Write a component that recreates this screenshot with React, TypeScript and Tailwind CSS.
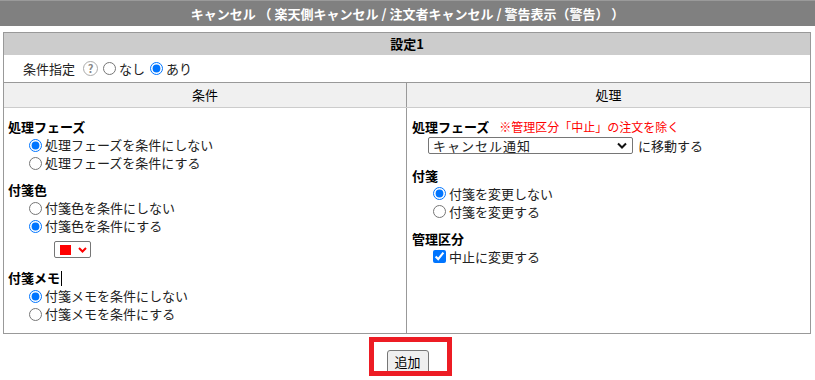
import React from "react";

const font = { fontFamily: '"Noto Sans CJK JP", "Noto Sans", sans-serif' };

function Radio({ checked, label, name }: { checked?: boolean; label: string; name: string }) {
  return (
    <label className="flex items-center h-[18px] text-[13px] text-[#222]">
      <input
        type="radio"
        name={name}
        defaultChecked={checked}
        className="m-0 mr-[3px] ml-[5px] w-[13px] h-[13px] accent-[#0075ff]"
      />
      <span>{label}</span>
    </label>
  );
}

function Label({ children }: { children: React.ReactNode }) {
  return <div className="h-[18px] flex items-center text-[13px] font-bold text-black">{children}</div>;
}

export default function App() {
  return (
    <div className="w-[815px] h-[380px] bg-white overflow-hidden" style={font}>
      <div className="h-[26px] bg-[#808080] flex items-center justify-center text-white font-bold text-[13px] border-t border-[#9a9a9a]">
        キャンセル （ 楽天側キャンセル / 注文者キャンセル / 警告表示（警告） ）
      </div>
      <div className="ml-[3px] mr-[4px] mt-[6px] border border-[#999]">
        <div className="h-[22px] bg-[#cccccc] flex items-center justify-center font-bold text-[13px] text-black">
          設定1
        </div>
        <div className="h-[28px] flex items-center pl-[19px] text-[13px] text-[#222] border-b border-[#999]">
          <span>条件指定</span>
          <span className="ml-[8px] w-[15px] h-[15px] rounded-full border border-[#aaa] flex items-center justify-center text-[11px] font-bold text-[#888] leading-none">
            ?
          </span>
          <label className="flex items-center">
            <input type="radio" name="cond" className="m-0 ml-[5px] mr-[3px] w-[13px] h-[13px] accent-[#0075ff]" />
            <span>なし</span>
          </label>
          <label className="flex items-center">
            <input type="radio" name="cond" defaultChecked className="m-0 ml-[5px] mr-[3px] w-[13px] h-[13px] accent-[#0075ff]" />
            <span>あり</span>
          </label>
        </div>
        <div className="grid grid-cols-2 h-[25px] bg-[#f0f0f0] border-b border-[#cccccc] text-[13px] text-black">
          <div className="flex items-center justify-center border-r border-[#999]">条件</div>
          <div className="flex items-center justify-center">処理</div>
        </div>
        <div className="grid grid-cols-2 h-[225px]">
          <div className="border-r border-[#999] pl-[4px] pt-[10px]">
            <Label>処理フェーズ</Label>
            <div className="pl-[16px]">
              <Radio name="phase" checked label="処理フェーズを条件にしない" />
              <Radio name="phase" label="処理フェーズを条件にする" />
            </div>
            <div className="mt-[9px]">
              <Label>付箋色</Label>
            </div>
            <div className="pl-[16px]">
              <Radio name="color" label="付箋色を条件にしない" />
              <Radio name="color" checked label="付箋色を条件にする" />
            </div>
            <div className="ml-[46px] mt-[6px] w-[37px] h-[17px] border border-[#767676] rounded-[2px] flex items-center pl-[5px] gap-[7px]">
              <span className="w-[11px] h-[10px] bg-[#ff0000]" />
              <svg width="9" height="6" viewBox="0 0 9 6">
                <path d="M1 1 L4.5 4.5 L8 1" stroke="#ff0000" strokeWidth="2" fill="none" />
              </svg>
            </div>
            <div className="mt-[11px]">
              <Label>
                付箋メモ<span className="inline-block w-px h-[15px] bg-black ml-[1px]" />
              </Label>
            </div>
            <div className="pl-[16px]">
              <Radio name="memo" checked label="付箋メモを条件にしない" />
              <Radio name="memo" label="付箋メモを条件にする" />
            </div>
          </div>
          <div className="pl-[5px] pt-[10px]">
            <div className="h-[18px] flex items-center text-[13px]">
              <span className="font-bold text-black">処理フェーズ</span>
              <span className="ml-[10px] text-[12px] text-[#ff0000]">※管理区分「中止」の注文を除く</span>
            </div>
            <div className="pl-[16px] flex items-center text-[13px] text-[#222]">
              <div className="w-[205px] h-[17px] border border-[#767676] rounded-[2px] flex items-center justify-between pl-[4px] pr-[5px]">
                <span className="tracking-[1px]">キャンセル通知</span>
                <svg width="10" height="7" viewBox="0 0 10 7">
                  <path d="M1 1.5 L5 5.5 L9 1.5" stroke="#111" strokeWidth="2" fill="none" />
                </svg>
              </div>
              <span className="ml-[5px]">に移動する</span>
            </div>
            <div className="mt-[11px]">
              <Label>付箋</Label>
            </div>
            <div className="pl-[16px]">
              <Radio name="tag" checked label="付箋を変更しない" />
              <Radio name="tag" label="付箋を変更する" />
            </div>
            <div className="mt-[9px]">
              <Label>管理区分</Label>
            </div>
            <div className="pl-[16px]">
              <label className="flex items-center h-[18px] text-[13px] text-[#222]">
                <input type="checkbox" defaultChecked className="m-0 ml-[5px] mr-[3px] w-[13px] h-[13px] accent-[#0075ff]" />
                <span>中止に変更する</span>
              </label>
            </div>
          </div>
        </div>
      </div>
      <div className="flex justify-center mt-[14px]">
        <span className="relative inline-block">
          <button className="w-[42px] h-[24px] bg-[#efefef] border border-[#767676] rounded-[3px] text-[13px] text-black">
            追加
          </button>
          <span className="absolute left-[-18px] top-[-11px] w-[83px] h-[39px] border-[5px] border-[#ed1c24]" />
        </span>
      </div>
    </div>
  );
}
